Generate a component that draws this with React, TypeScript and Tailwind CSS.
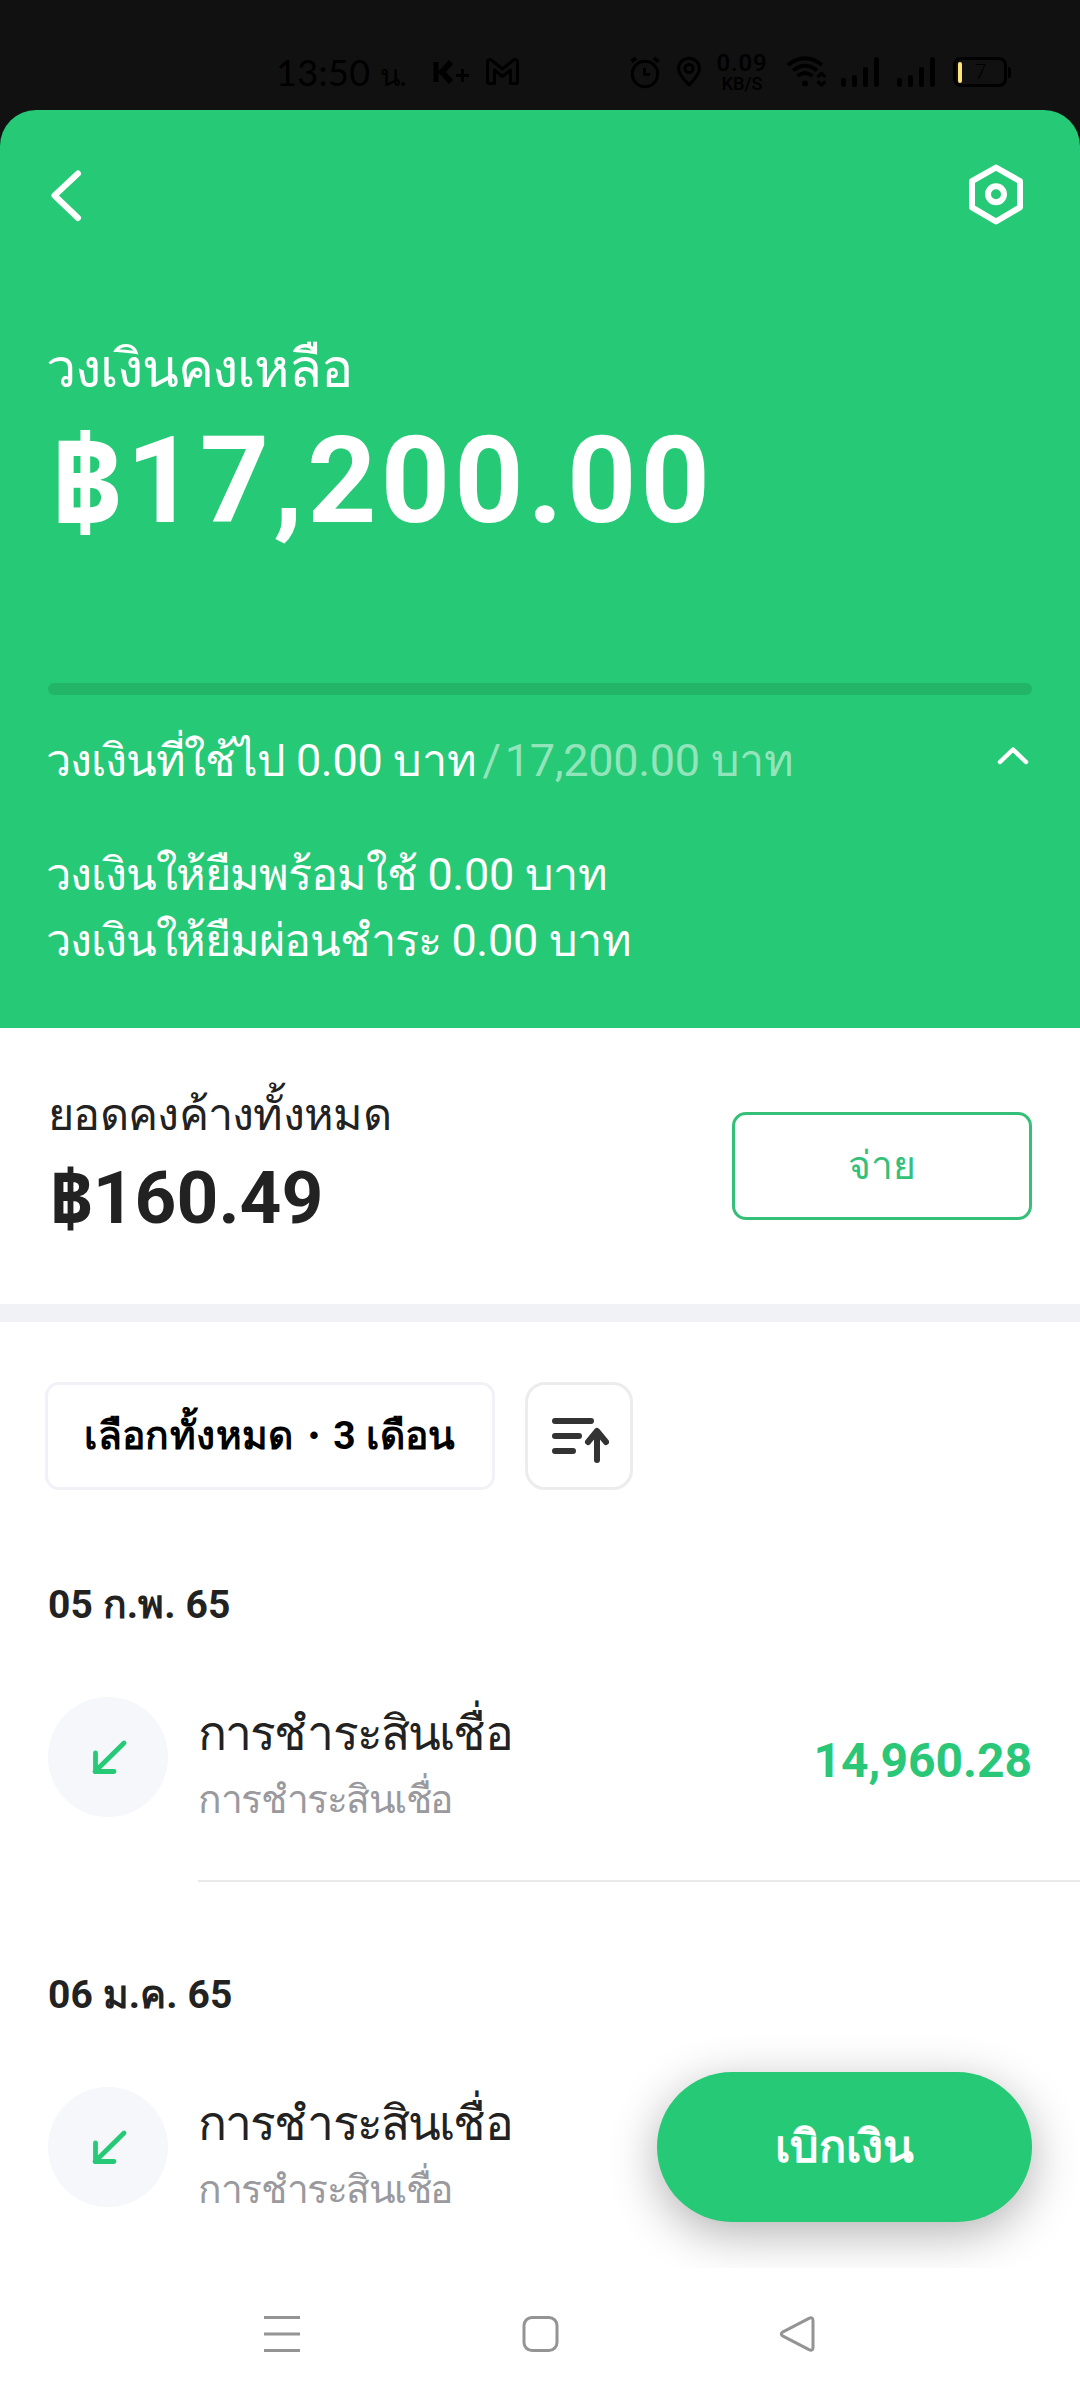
import type { ReactNode } from "react";

type Transaction = { date: string; title: string; subtitle: string; amount?: string };

const transactions: Transaction[] = [
  { date: "05 ก.พ. 65", title: "การชำระสินเชื่อ", subtitle: "การชำระสินเชื่อ", amount: "14,960.28" },
  { date: "06 ม.ค. 65", title: "การชำระสินเชื่อ", subtitle: "การชำระสินเชื่อ" },
];

function Icon({ w, h, className = "", children }: { w: number; h: number; className?: string; children: ReactNode }) {
  return (
    <svg
      width={w}
      height={h}
      viewBox={`0 0 ${w} ${h}`}
      fill="none"
      stroke="currentColor"
      strokeLinecap="round"
      strokeLinejoin="round"
      className={`block shrink-0 ${className}`}
    >
      {children}
    </svg>
  );
}

function SignalBars({ className = "" }: { className?: string }) {
  return (
    <div className={`flex h-[30px] w-[38px] items-end justify-between ${className}`}>
      <span className="h-[9px] w-[5px] rounded-[2px] bg-black" />
      <span className="h-[12px] w-[5px] rounded-[2px] bg-black" />
      <span className="h-[20px] w-[5px] rounded-[2px] bg-black" />
      <span className="h-[30px] w-[5px] rounded-[2px] bg-black" />
    </div>
  );
}

function StatusBar() {
  return (
    <div className="flex h-[110px] items-start bg-[#111111] pt-[52px] pl-[276px] text-black">
      <span className="mt-[2px] w-[157px] font-[Lato,Roboto,sans-serif] text-[36px] leading-[36px] tracking-[0.4px] whitespace-nowrap">
        13:50<span className="ml-[9px] text-[30px] tracking-[-1px]">น.</span>
      </span>
      <Icon w={37} h={28} className="mt-[5px]">
        <path d="M3 5V25" strokeWidth="5" strokeLinecap="butt" />
        <path d="M18 5L9 15L18 25" strokeWidth="6" strokeLinecap="butt" strokeLinejoin="miter" />
        <path d="M23 18.500H36M29.500 12V25" strokeWidth="3" strokeLinecap="butt" />
      </Icon>
      <Icon w={33} h={28} className="mt-[6px] ml-[16px]">
        <path
          d="M1.500 24V4C1.500 1.500 4 0.800 6 2.500L16.500 11L27 2.500C29 0.800 31.500 1.500 31.500 4V24C31.500 25 31 25.500 30 25.500H24.500V12L16.500 18.500L8.500 12V25.500H3C2 25.500 1.500 25 1.500 24Z"
          strokeWidth="3"
        />
      </Icon>
      <Icon w={30} h={34} className="mt-[4px] ml-[111px]">
        <circle cx="15" cy="18" r="12.700" strokeWidth="3" />
        <path d="M14.500 12V18.500H20" strokeWidth="3" strokeLinecap="butt" />
        <path d="M1.500 5.500L6 2M28.500 5.500L24 2" strokeWidth="3.500" strokeLinecap="butt" />
      </Icon>
      <Icon w={26} h={34} className="mt-[4px] ml-[16px]">
        <path d="M13 29C9 24.500 2.500 18.500 2.500 12.700A10.500 10.500 0 0 1 23.500 12.700C23.500 18.500 17 24.500 13 29Z" strokeWidth="3" />
        <circle cx="13" cy="12.500" r="4" strokeWidth="3" />
      </Icon>
      <div className="ml-[13px] flex w-[54px] flex-col items-center font-[Roboto,sans-serif] font-medium">
        <span className="text-[24px] leading-[23px] tracking-[0.9px]">0.09</span>
        <span className="text-[18px] leading-[18px]">KB/S</span>
      </div>
      <Icon w={40} h={32} className="mt-[4px] ml-[17px]">
        <path d="M2 9Q19 -4.500 36 9M7 14.500Q19 5 31 14.500M11.500 20Q19 14 26.500 20" strokeWidth="4" strokeLinecap="butt" />
        <circle cx="19" cy="27.500" r="3" fill="currentColor" stroke="none" />
        <path d="M31.500 21L35.500 17.500L39.500 21M31.500 25.500L35.500 29L39.500 25.500" strokeWidth="3.200" strokeLinecap="butt" />
      </Icon>
      <SignalBars className="mt-[5px] ml-[15px]" />
      <SignalBars className="mt-[5px] ml-[18px]" />
      <div className="mt-[5px] ml-[18px] flex items-center gap-[1px]">
        <div className="flex h-[30px] w-[54px] items-center rounded-[8px] border-[3px] border-black pl-[2px]">
          <span className="h-[21px] w-[4px] rounded-[2px] bg-[#ffe27a]" />
          <span className="w-[37px] text-center text-[21px] leading-[24px] font-light">7</span>
        </div>
        <span className="h-[11px] w-[3px] rounded-r-[2px] bg-black" />
      </div>
    </div>
  );
}

function Baht() {
  return (
    <span className="mr-[-0.025em] ml-[0.02em] align-[-0.045em] font-['Noto_Sans_Thai',Roboto,sans-serif] text-[1.06em] leading-none font-extrabold">
      ฿
    </span>
  );
}

function CreditHeader() {
  return (
    <section className="bg-[#111111]">
      <div className="flex h-[918px] flex-col rounded-t-[36px] bg-[#26c976] px-[48px] text-white">
        <div className="flex h-[229px] justify-between pt-[52px]">
          <Icon w={40} h={64} className="mt-[2px]">
            <path d="M30 9.500L6.500 31.500L30 54" strokeWidth="6" />
          </Icon>
          <Icon w={64} h={64} className="mr-[4px]">
            <path d="M32 5.500L56 19.200V45.300L32 59.500L8 45.300V19.200Z" strokeWidth="6" />
            <circle cx="32" cy="32.300" r="8" strokeWidth="6" />
          </Icon>
        </div>
        <h1 className="-ml-[2px] text-[54px] leading-[60px] tracking-[-1.1px]">วงเงินคงเหลือ</h1>
        <p className="mt-[17px] h-[130px] text-[121px] leading-[130px] font-bold tracking-[4.100px] whitespace-nowrap">
          <Baht />
          17,200.00
        </p>
        <div className="mt-[137px] h-[12px] rounded-full bg-[#22b568]" />
        <div className="mt-[36px] flex h-[60px] items-start justify-between">
          <p className="-ml-[2px] text-[45px] leading-[60px] tracking-[-0.3px] whitespace-nowrap">
            <span className="tracking-[-1.1px]">วงเงินที่ใช้ไป</span> 0.00 บาท
            <span className="ml-[6px] text-white/50">/</span>
            <span className="ml-[4px] text-white/50">17,200.00 บาท</span>
          </p>
          <Icon w={40} h={30} className="mt-[9px]">
            <path d="M8 22L21 9.500L34 22" strokeWidth="4.500" />
          </Icon>
        </div>
        <div className="mt-[51px] -ml-[2px] text-[45px] leading-[66px] tracking-[-0.3px] whitespace-nowrap">
          <p>
            <span className="tracking-[-1.1px]">วงเงินให้ยืมพร้อมใช้</span> 0.00 บาท
          </p>
          <p>
            <span className="tracking-[-1.1px]">วงเงินให้ยืมผ่อนชำระ</span> 0.00 บาท
          </p>
        </div>
      </div>
    </section>
  );
}

function Outstanding() {
  return (
    <section className="flex h-[276px] items-start justify-between px-[48px]">
      <div className="pt-[57px]">
        <p className="text-[45px] leading-[60px] tracking-[-0.7px]">ยอดคงค้างทั้งหมด</p>
        <p className="mt-[13px] h-[80px] text-[73px] leading-[80px] font-bold">
          <Baht />
          160.49
        </p>
      </div>
      <button className="mt-[84px] h-[108px] w-[300px] rounded-[14px] border-[3px] border-[#35c07a] text-[39px] leading-[60px] text-[#35c07a]">
        จ่าย
      </button>
    </section>
  );
}

function Filters() {
  return (
    <div className="flex gap-[30px] pt-[60px] pl-[45px]">
      <button className="h-[108px] w-[450px] rounded-[14px] border-[3px] border-[#f1f2f7] pt-px text-[39px] font-bold tracking-[0.4px] whitespace-nowrap text-black">
        เลือกทั้งหมด・3 เดือน
      </button>
      <button className="flex size-[108px] items-center justify-center rounded-[20px] border-[3px] border-[#ececec] text-[#333333]">
        <Icon w={60} h={60}>
          <path d="M6 15H42M6 30H30M6 45H24" strokeWidth="6" />
          <path d="M48 54V26M39 36L48 25L57 36" strokeWidth="6" />
        </Icon>
      </button>
    </div>
  );
}

function TransactionGroup({ item, last }: { item: Transaction; last: boolean }) {
  return (
    <article className="h-[390px] pl-[48px]">
      <h2 className="pt-px text-[39px] leading-[60px] font-bold tracking-[0.1px]">{item.date}</h2>
      <div className="mt-[62px] flex">
        <span className="flex size-[120px] shrink-0 items-center justify-center rounded-full bg-[#f5f7fb] text-[#26c976]">
          <Icon w={44} h={44}>
            <path d="M38 8L9 36.500M9.500 18V36.500H28" strokeWidth="4.800" />
          </Icon>
        </span>
        <div className={`ml-[30px] flex h-[185px] flex-1 justify-between pr-[48px] ${last ? "" : "border-b-2 border-[#e9e9eb]"}`}>
          <div className="pt-[7px]">
            <p className="text-[48px] leading-[60px] tracking-[-1.850px]">{item.title}</p>
            <p className="mt-[6px] text-[39px] leading-[60px] tracking-[-1.5px] text-[#99999e]">{item.subtitle}</p>
          </div>
          {item.amount && <p className="pt-[34px] text-[48px] leading-[60px] font-bold text-[#29c777]">{item.amount}</p>}
        </div>
      </div>
    </article>
  );
}

function NavigationBar() {
  return (
    <nav className="relative z-10 flex h-[132px] items-center justify-between bg-white pr-[260px] pl-[261px] text-[#949494]">
      <Icon w={42} h={42}>
        <path d="M3 4.500H39M3 21H39M3 37.500H39" strokeWidth="3" strokeLinecap="butt" />
      </Icon>
      <Icon w={42} h={42}>
        <rect x="4" y="4.500" width="33" height="33" rx="8" strokeWidth="3" />
      </Icon>
      <Icon w={42} h={42}>
        <path d="M4.500 19.200L31 5.300Q35 3.500 35 7.500V34.500Q35 38.500 31 36.700L4.500 22.800Q2 21 4.500 19.200Z" strokeWidth="3" />
      </Icon>
    </nav>
  );
}

export default function App() {
  return (
    <div className="flex h-[2400px] w-[1080px] flex-col overflow-hidden bg-white font-[Roboto,sans-serif] text-[#222222]">
      <StatusBar />
      <main className="relative h-[2158px] overflow-hidden">
        <CreditHeader />
        <Outstanding />
        <div className="h-[18px] bg-[#f1f2f6]" />
        <Filters />
        <div className="pt-[84px]">
          {transactions.map((item, index) => (
            <TransactionGroup key={item.date} item={item} last={index === transactions.length - 1} />
          ))}
        </div>
        <button className="absolute right-[48px] bottom-[46px] h-[150px] w-[375px] rounded-full bg-[#26c976] text-[45px] font-bold text-white shadow-[0_12px_48px_rgba(0,0,0,0.3)]">
          เบิกเงิน
        </button>
      </main>
      <NavigationBar />
    </div>
  );
}
